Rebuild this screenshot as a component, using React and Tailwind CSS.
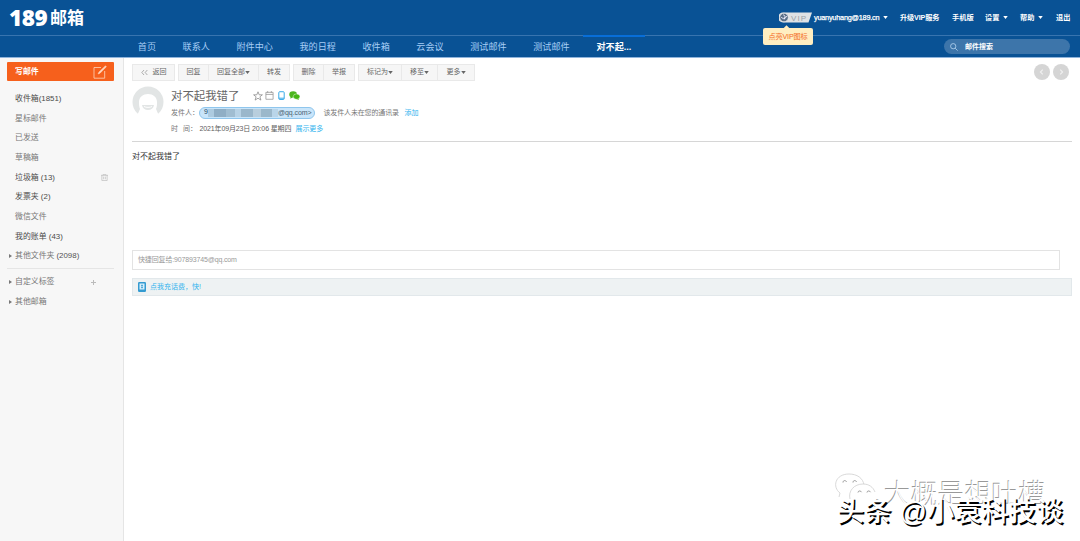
import React from 'react';

const Caret = ({ className = '' }) => (
  <svg viewBox="0 0 6 4" className={`h-[3px] w-[5px] shrink-0 ${className}`} fill="currentColor"><path d="M0 0h6L3 4z" /></svg>
);

const tabs = ['首页', '联系人', '附件中心', '我的日程', '收件箱', '云会议', '测试邮件', '测试邮件'];

const folders = [
  ['收件箱(1851)', true], ['星标邮件'], ['已发送'], ['草稿箱'], ['垃圾箱 (13)', true, 'trash'],
  ['发票夹 (2)', true], ['微信文件'], ['我的账单 (43)', true],
];

const toolGroups = [
  [['返回', 'w-[43px]', 'back']],
  [['回复', 'w-[31px]'], ['回复全部', 'w-[50px]', 'menu'], ['转发', 'w-[31px]']],
  [['删除', 'w-[31px]'], ['举报', 'w-[31px]']],
  [['标记为', 'w-[44px]', 'menu'], ['移至', 'w-[36px]', 'menu'], ['更多', 'w-[37px]', 'menu']],
];

function Header() {
  return (
    <header className="relative h-[58px] shrink-0 border-b border-[#8fb4dc] bg-[#095295] text-white">
      <div className="flex h-[35px] items-center pl-[9px] pr-[10px]">
        <div className="flex w-[772px] items-center pt-0.5 whitespace-nowrap">
          <span className="w-[41px] pb-[1px] font-['Open_Sans'] text-[22.500px] leading-[22px] font-extrabold tracking-[-0.4px]">189</span>
          <span className="pt-[1px] text-[17px] leading-[22px] font-bold">邮箱</span>
        </div>
        <div className="flex flex-1 items-center text-[7.2px] leading-[10px] font-bold whitespace-nowrap">
          <svg viewBox="0 0 33 11" className="h-[11px] w-[33px] shrink-0">
            <path d="M4 .5h29l-3.5 10H4a5 5 0 0 1 0-10z" fill="#dfe2e5" />
            <circle cx="5" cy="5.500" r="4.300" fill="#596f88" stroke="#f2f2f2" strokeWidth=".7" />
            <path d="M2.200 5.300c2 2 5 1 5.500-1.300M4.200 2.700l2 1.700-1 3" fill="none" stroke="#eef" strokeWidth="1" />
            <text x="12" y="8.500" fontFamily="Liberation Sans" fontSize="8" letterSpacing="1.1" fill="#9ba2a8" fontWeight="400">VIP</text>
          </svg>
          <span className="ml-[2px] w-[66px] font-['Liberation_Sans'] text-[7.300px] tracking-[-0.22px] font-normal [-webkit-text-stroke:0.25px_white]">yuanyuhang@189.cn</span>
          <Caret className="ml-[3px]" />
          <span className="ml-[12px] w-[39px] tracking-[-0.15px]">升级VIP服务</span>
          <span className="ml-[13px] w-[21px]">手机版</span>
          <span className="ml-[12px] w-[14px]">设置</span><Caret className="ml-[4px]" />
          <span className="ml-[12px] w-[14px]">帮助</span><Caret className="ml-[4px]" />
          <span className="ml-[13px] w-[14px]">退出</span>
        </div>
      </div>
      <nav className="flex h-[22px] items-stretch border-t border-[#3874af] pl-[124.5px] pr-[10px] text-[9.1px] text-[#a6cdf5]">
        {tabs.map((t, i) => (
          <span key={i} className="flex items-center px-[13.3px] pt-[2px] whitespace-nowrap">{t}</span>
        ))}
        <span className="-mt-px flex w-[62px] items-center justify-center border-t-2 border-[#086ed8] pt-px font-bold text-white whitespace-nowrap">对不起...</span>
        <div className="mt-[3px] ml-auto flex h-[15px] w-[126px] items-center rounded-full bg-[#3d75aa] pl-[6px] text-[7px] font-bold text-white">
          <svg viewBox="0 0 10 10" className="mr-[7px] size-[8px]" fill="none" stroke="#b9d7f1" strokeWidth="1"><circle cx="4" cy="4" r="3.3" /><path d="m6.5 6.5 3 3" /></svg>
          <span className="pt-px">邮件搜索</span>
        </div>
      </nav>
      <div className="absolute top-[28px] left-[763px] flex h-[17px] w-[50px] items-center justify-center rounded-[2px] bg-[#ffeec1] pt-[2px] text-[7.2px] tracking-[-0.2px] text-[#f36a1f] whitespace-nowrap">
        <svg viewBox="0 0 8 4" className="absolute -top-[3px] left-[20px] h-[4px] w-[7px]"><path d="M4 0l4 4H0z" fill="#ffeec1" /></svg>
        点亮VIP图标
      </div>
    </header>
  );
}

function Sidebar() {
  return (
    <aside className="w-[124px] shrink-0 border-r border-[#e5e5e5] bg-[#f7f7f7] pt-[4px] text-[7.9px] text-[#777]">
      <div className="mx-[7px] flex h-[19px] w-[107px] items-center justify-between rounded-[1px] bg-[#f6601c] pr-[7px] pl-[8px] font-bold text-white">
        写邮件
        <svg viewBox="0 0 14 14" className="size-[14px]" fill="none" stroke="#ffd6bd" strokeWidth=".8"><path d="M8 2.5H1v10.7h10.7V6" /><path d="M5 9l1-2L12.5.8l.9.9L7 8.2z" fill="#ffd6bd" strokeWidth=".5" /></svg>
      </div>
      <div className="pt-[8px]">
        {folders.map(([name, unread, icon]) => (
          <div key={name} className={`flex h-[19.7px] items-center justify-between pr-[15px] pl-[15px] whitespace-nowrap ${unread ? 'text-[#4b4b4b]' : ''}`}>
            {name}
            {icon && <svg viewBox="0 0 8 8" className="size-[7px]" fill="none" stroke="#bbb" strokeWidth=".8"><path d="M0 1.5h8M2.5 1.5V.4h3v1.1M1 1.5v6h6v-6M3 3v3M5 3v3" /></svg>}
          </div>
        ))}
        <Group name="其他文件夹" count="(2098)" />
      </div>
      <div className="mx-[7px] mt-[2px] mb-[3px] h-px w-[107px] bg-[#e5e5e5]" />
      <Group name="自定义标签" plus />
      <Group name="其他邮箱" />
    </aside>
  );
}

function Group({ name, count, plus }) {
  return (
    <div className="flex h-[19.7px] items-center pl-[9px] whitespace-nowrap">
      <svg viewBox="0 0 3 4" className="mr-[3px] h-[4px] w-[3px]" fill="#777"><path d="M0 0l3 2-3 2z" /></svg>
      {name}
      {count && <span className="ml-[2px] text-[#555]">{count}</span>}
      {plus && <svg viewBox="0 0 5 5" className="mr-[27px] ml-auto size-[5px]" stroke="#bbb" strokeWidth="1"><path d="M0 2.5h5M2.5 0v5" /></svg>}
    </div>
  );
}

function Toolbar() {
  return (
    <div className="flex h-[17px] gap-[3px] text-[7px] text-[#666]">
      {toolGroups.map((g, i) => (
        <div key={i} className="flex">
          {g.map(([label, w, kind]) => (
            <span key={label} className={`flex items-center justify-center border-y border-r border-[#e9e9e9] bg-[#f6f6f6] whitespace-nowrap first:border-l ${w}`}>
              {kind === 'back' && <svg viewBox="0 0 8 6" className="mr-[5px] h-[5px] w-[7px]" fill="none" stroke="#888" strokeWidth=".8"><path d="M3.4 0L.8 3l2.6 3M7.4 0L4.8 3l2.6 3" /></svg>}
              {label}
              {kind === 'menu' && <Caret />}
            </span>
          ))}
        </div>
      ))}
      <div className="ml-auto flex gap-[3px] pr-[3px]">
        {['M5.5 3.500L4 5l1.500 1.500', 'M4.500 3.500L6 5 4.500 6.500'].map((d) => (
          <svg key={d} viewBox="0 0 10 10" className="size-[16px]"><circle cx="5" cy="5" r="5" fill="#d5d5d5" /><path d={d} fill="none" stroke="#f0f0f0" strokeWidth=".7" /></svg>
        ))}
      </div>
    </div>
  );
}

function SenderPill() {
  return (
    <span className="flex h-[12px] w-[116px] items-center rounded-full border border-[#8fc6ed] bg-[#c9e5fa] pl-[4px] font-['Liberation_Sans'] text-[#48606f]">
      <span className="text-[#24465f]">9</span>
      <span className="flex h-[8px] w-[70px] shrink-0">
        <i className="w-[6px] bg-[#adcbe0]" /><i className="w-[12px] bg-[#8faec5]" /><i className="w-[9px] bg-[#a0bdd1]" /><i className="w-[6px] bg-[#b7d2e5]" />
        <i className="w-[12px] bg-[#9ab7cb]" /><i className="w-[8px] bg-[#b8cedd]" /><i className="w-[11px] bg-[#9bb8cb]" /><i className="w-[6px] bg-[#b9d5e9]" />
      </span>
      <span className="pt-px text-[7px] tracking-[-0.05px] whitespace-nowrap">@qq.com&gt;</span>
    </span>
  );
}

function MessageHead() {
  return (
    <div className="mt-[5px] flex h-[55px]">
      <svg viewBox="0 0 32 32" className="size-8 shrink-0">
        <circle cx="16" cy="16" r="15.5" fill="#e2e5e5" />
        <path d="M5 32c0-4 2-6 3-9-1-2-1-5-1-7 0-5 4-8 9-8s9 3 9 8c0 2 0 5-1 7 1 3 3 5 3 9z" fill="#fff" />
        <path d="M10 19h12c-.5 3.400-3 5-6 5s-5.500-1.600-6-5z" fill="#e2e5e5" />
        <path d="M12 20.500c2 1.200 6 1.200 8 0" stroke="#fff" fill="none" />
      </svg>
      <div className="ml-[7px] flex flex-col text-[7px] whitespace-nowrap text-[#777]">
        <div className="flex h-[19px] items-center gap-[3px]">
          <span className="mr-[11px] w-[68px] text-[11.4px] leading-[16px] text-[#666]">对不起我错了</span>
          <svg viewBox="0 0 10 10" className="size-[10px]" fill="none" stroke="#888" strokeWidth=".75"><path d="M5 .8l1.2 3h3.200L6.900 5.800l1 3.300L5 7.200 2.100 9.100l1-3.300L.6 3.800h3.200z" /></svg>
          <svg viewBox="0 0 10 10" className="-ml-px size-[9px]" fill="none" stroke="#999" strokeWidth=".9"><path d="M1 1.500h8v7.700H1zM1 3.800h8M3 0v2M7 0v2" /></svg>
          <svg viewBox="0 0 10 10" className="size-[9px]" fill="none" stroke="#35a9e8" strokeWidth="1.1"><rect x="2" y=".8" width="6" height="8.600" rx="1" /><path d="M2 8h6" /></svg>
          <svg viewBox="0 0 12 10" className="h-[9px] w-[11px]"><ellipse cx="4.500" cy="3.800" rx="4.300" ry="3.500" fill="#4db51f" /><path d="M1.500 6v2.500L4 7z" fill="#4db51f" /><ellipse cx="8.300" cy="6.200" rx="3.700" ry="3" fill="#45b613" stroke="#fff" strokeWidth=".5" /><path d="M10 8l1 2-2.500-1z" fill="#45b613" /></svg>
        </div>
        <div className="flex h-[15px] items-center">
          <span className="w-[28px] pt-px">发件人：</span>
          <SenderPill />
          <span className="ml-[8.500px] w-[75px] pt-px tracking-[-0.15px]">该发件人未在您的通讯录</span>
          <span className="ml-[6px] pt-px text-[#33b4ee]">添加</span>
        </div>
        <div className="flex h-[17px] items-center pt-px">
          <span className="w-[28.500px]">时<span className="ml-[5px]">间：</span></span>
          <span className="w-[91px] tracking-[-0.13px] text-[#606060]">2021年09月23日 20:06 星期四</span>
          <span className="ml-[5px] tracking-[-0.1px] text-[#33b4ee]">展示更多</span>
        </div>
      </div>
    </div>
  );
}

function Watermark() {
  return (
    <div className="absolute top-[470px] left-[834px] h-[60px] w-[240px] whitespace-nowrap">
      <svg viewBox="0 0 44 38" className="absolute top-0 left-0 h-[38px] w-[44px]" fill="#fff" stroke="#cfcfcf" strokeWidth=".8">
        <path d="M5 27l1-4C-2 17 1 4 15 4c8 0 14 4 15 11" />
        <path d="M16 29c-2-8 4-15 13-15 6 0 10 3 12 8" />
        <g fill="none" stroke="#999" strokeWidth="1"><path d="M9 12.500c0-2.500 3-2.500 3.500-.5M19 12.500c0-2.500 3-2.500 3.500-.5M24 22.500c0-2 3-2 3.500-.3M33 22.500c0-2 3-2 3.500-.3" /></g>
      </svg>
      <span className="absolute top-[9px] left-[50px] text-[26.900px] leading-[32px] font-light text-white [text-shadow:-0.7px_-0.7px_0_#999]">大概是想吐槽</span>
      <span className="absolute top-[25px] left-[3px] text-[27.200px] leading-[34px] font-medium tracking-[0.1px] text-white [text-shadow:1.600px_1.600px_0_#000]">头条 @小袁科技谈</span>
    </div>
  );
}

export default function App() {
  return (
    <div className="relative flex h-[541px] w-[1080px] flex-col overflow-hidden bg-white font-['Liberation_Sans','Noto_Sans_CJK_SC',sans-serif]">
      <Header />
      <div className="flex min-h-0 flex-1">
        <Sidebar />
        <main className="flex flex-1 flex-col pt-[6px] pr-[8px] pl-[8px]">
          <Toolbar />
          <MessageHead />
          <div className="h-[109px] border-t border-[#d6d6d6] pt-[9px] text-[8px] leading-[12px] text-[#333]">对不起我错了</div>
          <div className="mr-[12px] flex h-[20px] items-center border border-[#e3e3e3] pl-[5px] text-[7px] tracking-[-0.15px] text-[#999]">快捷回复给:907893745@qq.com</div>
          <div className="mt-[8px] flex h-[18px] items-center border border-[#e2e8eb] bg-[#eef2f3] pl-[5px] text-[7px] text-[#33b4ee]">
            <svg viewBox="0 0 8 10" className="mr-[4px] h-[10px] w-[8px]"><rect width="8" height="10" rx="1.200" fill="#349bd1" /><path d="M1.500 1.500h5v6h-5z" fill="#d7effb" /><path d="M4 2.500v4M3 3.500h2M3 5.500h2" stroke="#349bd1" strokeWidth=".7" /></svg>
            点我充话费，快!
          </div>
        </main>
      </div>
      <Watermark />
    </div>
  );
}
